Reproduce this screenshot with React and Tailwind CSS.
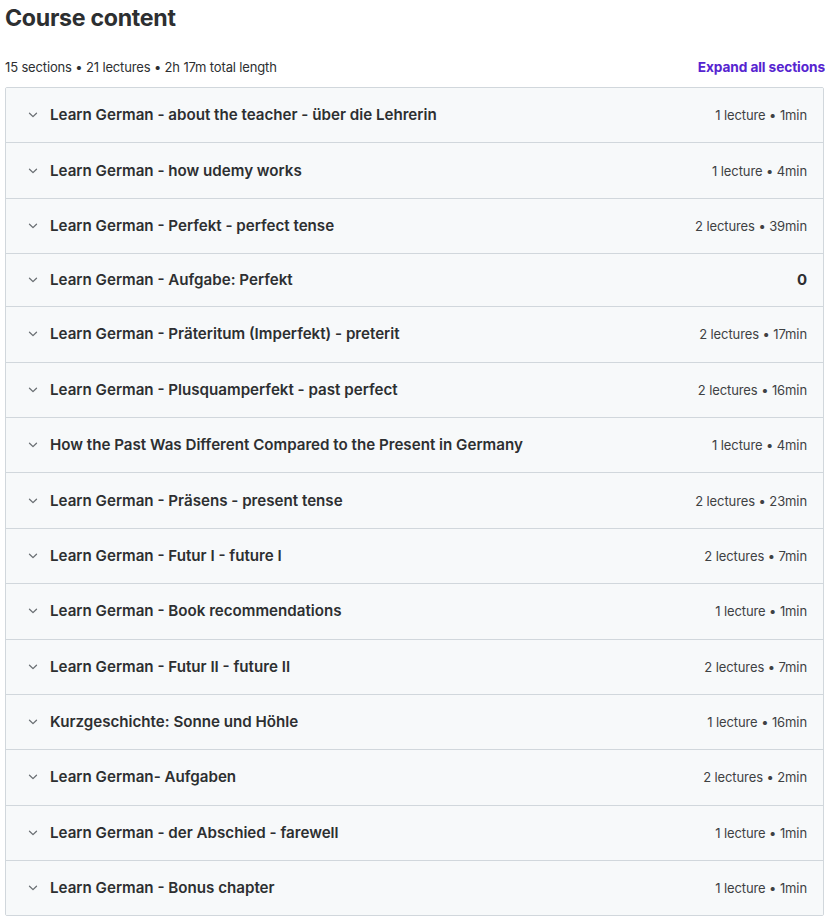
import React from "react";

const sections = [
  ["Learn German - about the teacher - über die Lehrerin", "1 lecture • 1min"],
  ["Learn German - how udemy works", "1 lecture • 4min"],
  ["Learn German - Perfekt - perfect tense", "2 lectures • 39min"],
  ["Learn German - Aufgabe: Perfekt", "0"],
  ["Learn German - Präteritum (Imperfekt) - preterit", "2 lectures • 17min"],
  ["Learn German - Plusquamperfekt - past perfect", "2 lectures • 16min"],
  ["How the Past Was Different Compared to the Present in Germany", "1 lecture • 4min"],
  ["Learn German - Präsens - present tense", "2 lectures • 23min"],
  ["Learn German - Futur I - future I", "2 lectures • 7min"],
  ["Learn German - Book recommendations", "1 lecture • 1min"],
  ["Learn German - Futur II - future II", "2 lectures • 7min"],
  ["Kurzgeschichte: Sonne und Höhle", "1 lecture • 16min"],
  ["Learn German- Aufgaben", "2 lectures • 2min"],
  ["Learn German - der Abschied - farewell", "1 lecture • 1min"],
  ["Learn German - Bonus chapter", "1 lecture • 1min"],
];

function Chevron() {
  return (
    <svg width="10" height="6" viewBox="0 0 10 6" fill="none" className="shrink-0">
      <path d="M1.5 1.2 L5 4.6 L8.5 1.2" stroke="#6a6f73" strokeWidth="1.3" strokeLinecap="round" strokeLinejoin="round" />
    </svg>
  );
}

function SectionRow({ title, meta, first }) {
  const empty = meta === "0";
  return (
    <div
      className={`flex items-center justify-between bg-[#f7f9fa] pl-[22px] pr-4 py-4 ${
        first ? "" : "border-t border-[#d1d7dc]"
      }`}
    >
      <div className={`flex items-center gap-[12px] ${empty ? "h-[20px]" : "h-[22.4px]"}`}>
        <Chevron />
        <span className="text-[15.15px] leading-[20px] font-semibold text-[#2d2f31]">{title}</span>
      </div>
      {empty ? (
        <span className="text-[15px] leading-[20px] font-bold text-[#2d2f31]">0</span>
      ) : (
        <span className="text-[13px] leading-[20px] text-[#3e4143] tracking-[-0.1px]">{meta}</span>
      )}
    </div>
  );
}

export default function App() {
  return (
    <div className="bg-white pl-[5px] pt-[4px] pb-[2px]" style={{ fontFamily: "Inter, 'Liberation Sans', sans-serif" }}>
      <h2 className="text-[23.2px] font-bold leading-[28px] text-[#2d2f31] tracking-[-0.3px]">Course content</h2>
      <div className="mt-[25px] flex items-center justify-between h-[20px]">
        <span className="text-[13px] leading-[20px] text-[#2d2f31] tracking-[-0.15px]">
          15 sections • 21 lectures • 2h 17m total length
        </span>
        <button className="text-[13.7px] leading-[20px] font-bold text-[#5624d0] tracking-[-0.1px]">
          Expand all sections
        </button>
      </div>
      <div className="mt-[10px] mr-[1px] border border-[#d1d7dc] rounded-[2px] overflow-hidden">
        {sections.map(([t, m], i) => (
          <SectionRow key={i} title={t} meta={m} first={i === 0} />
        ))}
      </div>
    </div>
  );
}
